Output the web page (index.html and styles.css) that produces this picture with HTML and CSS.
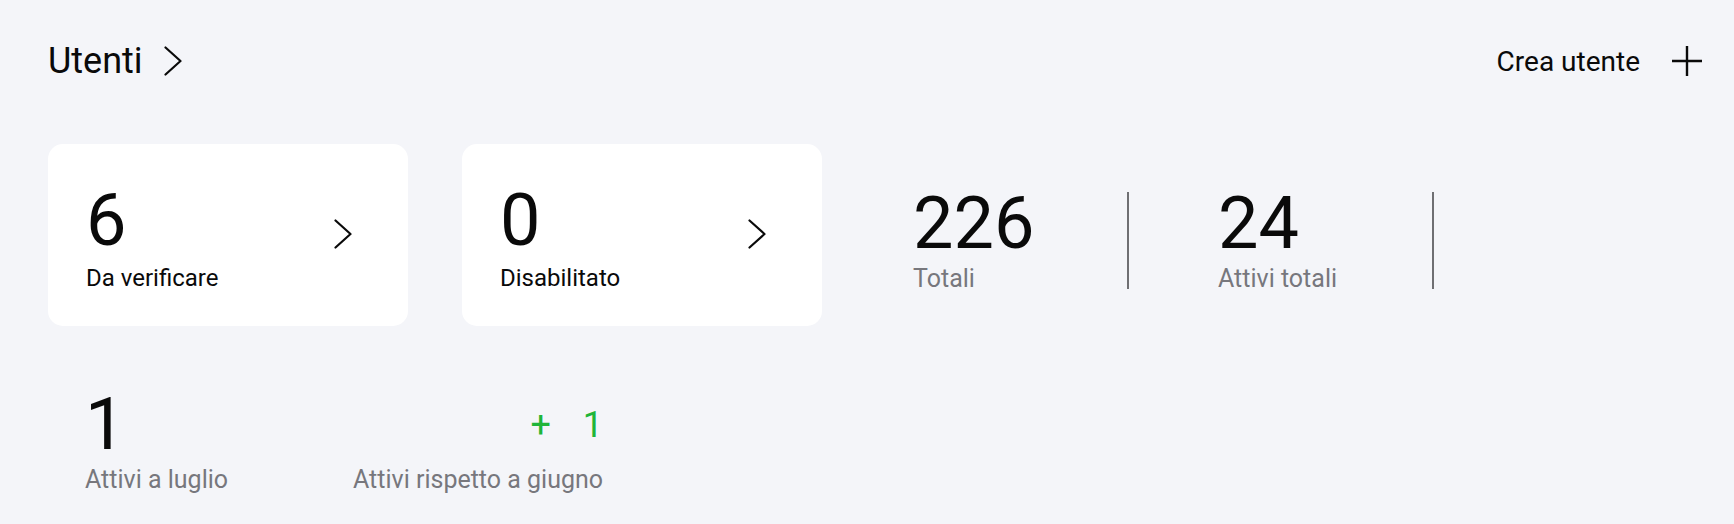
FILE: index.html
```html
<!DOCTYPE html>
<html lang="it">
<head>
    <meta charset="UTF-8">
    <meta name="viewport" content="width=device-width, initial-scale=1.0">
    <title>Utenti</title>
    <link rel="stylesheet" href="styles.css">
</head>
<body>
    <div class="page">
        <header class="head">
            <a class="title" href="#">
                Utenti
                <svg class="chevron" viewBox="0 0 18 30" width="18" height="30"><polyline points="1.5,1.5 16.5,15 1.5,28.5"/></svg>
            </a>
            <a class="create" href="#">
                Crea utente
                <svg class="plus" viewBox="0 0 30 30" width="30" height="30"><path d="M15 0 V30 M0 15 H30"/></svg>
            </a>
        </header>

        <section class="overview">
            <a class="card" href="#">
                <div>
                    <div class="num">6</div>
                    <div class="label">Da verificare</div>
                </div>
                <svg class="chevron" viewBox="0 0 18 30" width="18" height="30"><polyline points="1.5,1.5 16.5,15 1.5,28.5"/></svg>
            </a>
            <a class="card" href="#">
                <div>
                    <div class="num">0</div>
                    <div class="label">Disabilitato</div>
                </div>
                <svg class="chevron" viewBox="0 0 18 30" width="18" height="30"><polyline points="1.5,1.5 16.5,15 1.5,28.5"/></svg>
            </a>
            <div class="stats">
                <div class="stat">
                    <div class="num">226</div>
                    <div class="label muted">Totali</div>
                </div>
                <div class="stat">
                    <div class="num">24</div>
                    <div class="label muted">Attivi totali</div>
                </div>
            </div>
        </section>

        <section class="monthly">
            <div class="month">
                <div class="num">1</div>
                <div class="label muted">Attivi a luglio</div>
            </div>
            <div class="delta">
                <div class="delta-num"><span>+</span><span>1</span></div>
                <div class="label muted">Attivi rispetto a giugno</div>
            </div>
        </section>
    </div>
</body>
</html>
```

FILE: styles.css
```css
body {
    margin: 0;
    background: #f4f5f9;
    color: #0a0a0a;
    font-family: Roboto, "Noto Sans", sans-serif;
}
a {
    color: inherit;
    text-decoration: none;
}
.page {
    padding: 33px 32px 0 48px;
}
.head {
    height: 56px;
    display: flex;
    align-items: center;
    justify-content: space-between;
}
.title {
    display: flex;
    align-items: center;
    gap: 21px;
    font-size: 36px;
}
.create {
    display: flex;
    align-items: center;
    gap: 32px;
    font-size: 28px;
}
.chevron polyline {
    fill: none;
    stroke: #0a0a0a;
    stroke-width: 2.2;
    stroke-linecap: round;
    stroke-linejoin: round;
}
.plus path {
    stroke: #0a0a0a;
    stroke-width: 2.4;
}
.overview {
    margin-top: 55px;
    display: flex;
    align-items: flex-start;
    gap: 54px;
}
.card {
    width: 360px;
    height: 182px;
    box-sizing: border-box;
    padding: 44px 56px 0 38px;
    background: #fff;
    border-radius: 15px;
    display: flex;
    justify-content: space-between;
    align-items: flex-start;
}
.card .chevron {
    margin-top: 31px;
}
.num {
    font-size: 72px;
    line-height: 64px;
}
.label {
    margin-top: 8px;
    font-size: 25px;
    line-height: 30px;
}
.card .num {
    line-height: 72px;
    margin-top: -3px;
}
.card .label {
    margin-top: 6px;
    font-size: 24px;
}
.muted {
    color: #77777d;
}
.stats {
    display: flex;
    margin-left: 37px;
    margin-top: 48px;
}
.stat {
    width: 216px;
    height: 97px;
    box-sizing: border-box;
    border-right: 2px solid #6f6f73;
}
.stat + .stat {
    margin-left: 89px;
}
.monthly {
    margin-top: 67px;
    padding-left: 37px;
    display: flex;
}
.month {
    width: 268px;
}
.delta {
    display: flex;
    flex-direction: column;
    align-items: flex-end;
}
.delta-num {
    display: flex;
    gap: 32px;
    font-size: 36px;
    line-height: 64px;
    color: #1fb53a;
}
```
